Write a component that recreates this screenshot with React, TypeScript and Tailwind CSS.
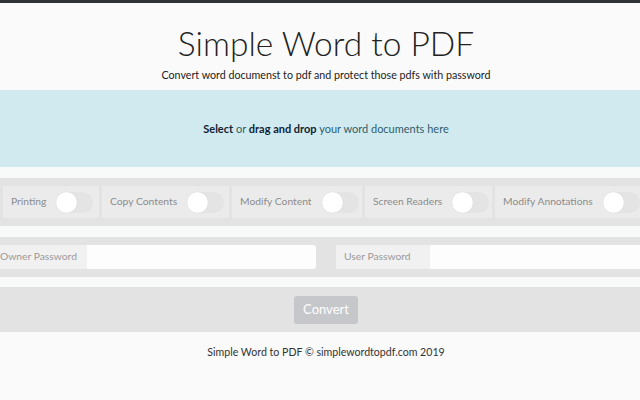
import React from 'react';

const TOGGLES = [
  { label: 'Printing', width: 'w-[96px]' },
  { label: 'Copy Contents', width: 'w-[127px]' },
  { label: 'Modify Content', width: 'w-[130px]' },
  { label: 'Screen Readers', width: 'w-[127px]' },
  { label: 'Modify Annotations', width: 'w-[150px]' },
];

function Toggle() {
  return (
    <span className="relative inline-flex h-[21px] w-[37px] shrink-0 rounded-full bg-[#e4e4e4]">
      <span className="h-[21px] w-[21px] rounded-full bg-white shadow-[0_0_1px_rgba(0,0,0,0.15)]" />
    </span>
  );
}

function PasswordField({ label, labelWidth, inputWidth }: { label: string; labelWidth: string; inputWidth: string }) {
  return (
    <div className="flex h-[24px]">
      <div className={`${labelWidth} flex items-center bg-[#f1f1f1] pl-[8px] text-[10.3px] text-[#9a9a9a]`}>{label}</div>
      <div className={`${inputWidth} rounded-r-[3px] bg-[#fdfdfd]`} />
    </div>
  );
}

export default function App() {
  return (
    <div className="h-[400px] w-[640px] overflow-hidden bg-[#fafafa]" style={{ fontFamily: '"Segoe UI", Lato, "Open Sans", sans-serif' }}>
      <div className="h-[3px] bg-[#2f3338]" />

      <header className="flex h-[87px] flex-col items-center pl-[12px] pt-[20px]">
        <h1 className="text-[33.5px] font-light leading-[40px] text-[#222]">Simple Word to PDF</h1>
        <p className="mt-[4px] text-[10.7px] text-[#222]">Convert word documenst to pdf and protect those pdfs with password</p>
      </header>

      <div className="flex h-[77px] items-center justify-center bg-[#d1eaf0] pl-[12px] pt-[2px] text-[11px] text-[#2f5d68]">
        <span>
          <b className="text-[#123]">Select</b> or <b className="text-[#123]">drag and drop</b> your word documents here
        </span>
      </div>

      <div className="h-[11px] bg-[#f8fafa]" />

      <div className="flex h-[48px] items-center gap-[3px] bg-[#e3e3e3] pl-[3px]">
        {TOGGLES.map((t) => (
          <div key={t.label} className={`${t.width} flex h-[32px] shrink-0 items-center gap-[10px] bg-[#ebebeb] pl-[8px] text-[10.3px] text-[#8c8c8c]`}>
            <span className="whitespace-nowrap">{t.label}</span>
            <Toggle />
          </div>
        ))}
      </div>

      <div className="h-[11px] bg-[#f8fafa]" />

      <div className="flex h-[40px] items-center bg-[#e3e3e3]">
        <div className="-ml-[8px]">
          <PasswordField label="Owner Password" labelWidth="w-[95px]" inputWidth="w-[229px]" />
        </div>
        <div className="ml-[20px]">
          <PasswordField label="User Password" labelWidth="w-[94px]" inputWidth="w-[220px]" />
        </div>
      </div>

      <div className="h-[10px] bg-[#f8fafa]" />

      <div className="flex h-[45px] items-center justify-center bg-[#e3e3e3] pl-[12px]">
        <button className="h-[28px] w-[64px] rounded-[3px] bg-[#c5c7ca] text-[13px] text-white">Convert</button>
      </div>

      <footer className="mt-[13px] pl-[12px] text-center text-[10.6px] text-[#333]">Simple Word to PDF © simplewordtopdf.com 2019</footer>
    </div>
  );
}
